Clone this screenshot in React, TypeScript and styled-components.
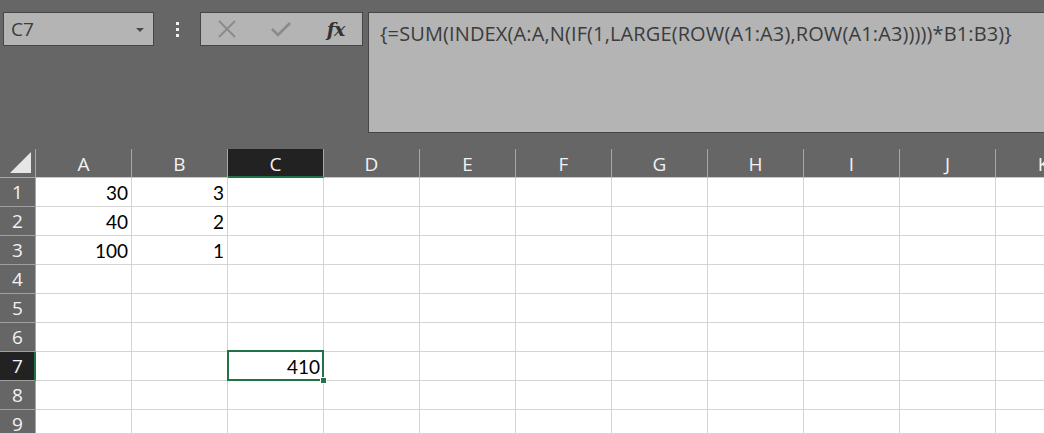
import styled, { createGlobalStyle } from "styled-components";

const GlobalStyle = createGlobalStyle`
    html, body {
        margin: 0;
        padding: 0;
        background: #666666;
        overflow: hidden;
    }
    body {
        font-family: "Open Sans", "Noto Sans", sans-serif;
    }
`;

const Page = styled.div`
    width: 1044px;
    height: 433px;
    overflow: hidden;
    background: #666666;
    display: flex;
    flex-direction: column;
`;

const TopBar = styled.div`
    height: 149px;
    box-sizing: border-box;
    padding: 12px 0 0 3px;
    display: flex;
    align-items: flex-start;
    flex-shrink: 0;
`;

const NameBox = styled.div`
    width: 151px;
    height: 34px;
    box-sizing: border-box;
    border: 1px solid #464646;
    background: #b4b4b4;
    display: flex;
    align-items: center;
    justify-content: space-between;
    padding: 0 9px 0 7px;
    color: #3c3c3c;
    font-size: 19px;
`;

const Caret = styled.span`
    width: 0;
    height: 0;
    border-left: 4px solid transparent;
    border-right: 4px solid transparent;
    border-top: 4px solid #4a4a4a;
    margin-top: 1px;
`;

const Grip = styled.div`
    width: 46px;
    height: 34px;
    display: flex;
    flex-direction: column;
    align-items: center;
    justify-content: center;
    gap: 3px;
    span {
        width: 3px;
        height: 3px;
        background: #f2f2f2;
    }
`;

const ButtonBox = styled.div`
    width: 163px;
    height: 34px;
    box-sizing: border-box;
    border: 1px solid #464646;
    background: #b4b4b4;
    display: flex;
    align-items: center;
    padding: 0 0 0 16px;
    gap: 34px;
    margin-right: 5px;
`;

const IconSlot = styled.div`
    width: 20px;
    height: 20px;
    display: flex;
    align-items: center;
    justify-content: center;
`;

const Fx = styled.span`
    font-family: "DejaVu Serif", "Liberation Serif", serif;
    font-style: italic;
    font-weight: bold;
    font-size: 19px;
    color: #333333;
    letter-spacing: -1px;
    margin-left: 1px;
`;

const FormulaBar = styled.div`
    flex: 1;
    height: 121px;
    box-sizing: border-box;
    border: 1px solid #464646;
    border-right: none;
    background: #b4b4b4;
    padding: 7px 0 0 11px;
    color: #3c3c3c;
    font-size: 20px;
    letter-spacing: 0.12px;
    white-space: nowrap;
    overflow: hidden;
`;

const Sheet = styled.div`
    display: grid;
    grid-template-columns: 36px repeat(11, 96px);
    grid-template-rows: 29px repeat(9, 29px);
`;

const Corner = styled.div`
    background: #666666;
    border-right: 1px solid #a8a8a8;
    border-bottom: 1px solid #a8a8a8;
    display: flex;
    align-items: flex-end;
    justify-content: flex-end;
    padding: 0 4px 4px 0;
    box-sizing: border-box;
    &::before {
        content: "";
        width: 0;
        height: 0;
        border-left: 21px solid transparent;
        border-bottom: 21px solid #e6e6e6;
    }
`;

const ColHead = styled.div<{ $active?: boolean }>`
    background: ${(p) => (p.$active ? "#222222" : "#666666")};
    color: #f2f2f2;
    border-right: 1px solid #a8a8a8;
    border-bottom: ${(p) => (p.$active ? "2px solid #217346" : "1px solid #c8c8c8")};
    box-sizing: border-box;
    display: flex;
    align-items: center;
    justify-content: center;
    font-size: 19px;
    padding-top: ${(p) => (p.$active ? "3px" : "2px")};
`;

const RowHead = styled.div<{ $active?: boolean }>`
    background: ${(p) => (p.$active ? "#222222" : "#666666")};
    color: #f2f2f2;
    border-right: ${(p) => (p.$active ? "2px solid #217346" : "1px solid #a8a8a8")};
    border-bottom: 1px solid #a0a0a0;
    box-sizing: border-box;
    display: flex;
    align-items: center;
    justify-content: center;
    font-size: 19px;
    padding-left: ${(p) => (p.$active ? "1px" : "0")};
`;

const Cell = styled.div<{ $selected?: boolean }>`
    position: relative;
    background: #ffffff;
    border-right: 1px solid #d4d4d4;
    border-bottom: 1px solid #d4d4d4;
    box-sizing: border-box;
    display: flex;
    align-items: center;
    justify-content: flex-end;
    padding: 1px 3px 0 0;
    font-family: "Lato", "Liberation Sans", sans-serif;
    font-size: 19px;
    color: #000000;
    ${(p) =>
        p.$selected &&
        `
        &::after {
            content: "";
            position: absolute;
            top: -2px;
            left: -1px;
            right: -1px;
            bottom: -1px;
            border: 2px solid #217346;
            pointer-events: none;
        }
    `}
`;

const FillHandle = styled.span`
    position: absolute;
    right: -4px;
    bottom: -4px;
    width: 5px;
    height: 5px;
    background: #217346;
    border: 1px solid #ffffff;
    z-index: 2;
`;

const columns = ["A", "B", "C", "D", "E", "F", "G", "H", "I", "J", "K"];

const values: Record<string, string> = {
    A1: "30",
    B1: "3",
    A2: "40",
    B2: "2",
    A3: "100",
    B3: "1",
    C7: "410",
};

const activeCol = "C";
const activeRow = 7;

function App() {
    const rows = [1, 2, 3, 4, 5, 6, 7, 8, 9];
    return (
        <Page>
            <GlobalStyle />
            <TopBar>
                <NameBox>
                    <span>C7</span>
                    <Caret />
                </NameBox>
                <Grip>
                    <span />
                    <span />
                    <span />
                </Grip>
                <ButtonBox>
                    <IconSlot>
                        <svg width="18" height="18" viewBox="0 0 18 18">
                            <path d="M1 1 L17 17 M17 1 L1 17" stroke="#8a8a8a" strokeWidth="1.8" fill="none" />
                        </svg>
                    </IconSlot>
                    <IconSlot>
                        <svg width="20" height="16" viewBox="0 0 20 16">
                            <path d="M1 8 L7 14 L19 2" stroke="#8a8a8a" strokeWidth="2.6" fill="none" />
                        </svg>
                    </IconSlot>
                    <IconSlot>
                        <Fx>fx</Fx>
                    </IconSlot>
                </ButtonBox>
                <FormulaBar>{"{=SUM(INDEX(A:A,N(IF(1,LARGE(ROW(A1:A3),ROW(A1:A3)))))*B1:B3)}"}</FormulaBar>
            </TopBar>
            <Sheet>
                <Corner />
                {columns.map((c) => (
                    <ColHead key={c} $active={c === activeCol}>
                        {c}
                    </ColHead>
                ))}
                {rows.map((r) => (
                    <>
                        <RowHead key={`h${r}`} $active={r === activeRow}>
                            {r}
                        </RowHead>
                        {columns.map((c) => {
                            const sel = c === activeCol && r === activeRow;
                            return (
                                <Cell key={`${c}${r}`} $selected={sel}>
                                    {values[`${c}${r}`]}
                                    {sel && <FillHandle />}
                                </Cell>
                            );
                        })}
                    </>
                ))}
            </Sheet>
        </Page>
    );
}

export default App;
